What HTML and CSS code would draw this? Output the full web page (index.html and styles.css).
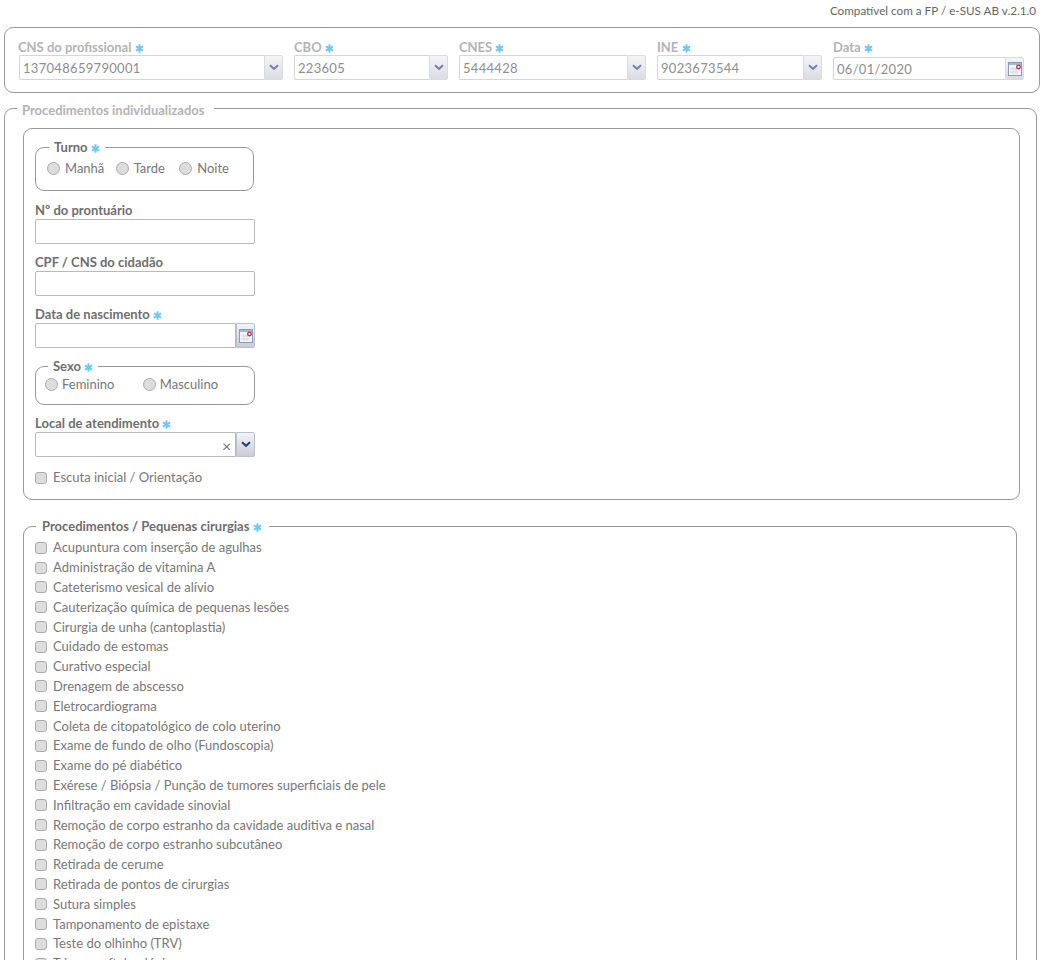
FILE: index.html
```html
<!DOCTYPE html>
<html lang="pt-BR">
<head>
    <meta charset="UTF-8">
    <title>Ficha de Procedimentos</title>
    <link rel="stylesheet" href="styles.css">
</head>
<body>
    <svg class="defs" width="0" height="0">
        <symbol id="req" viewBox="0 0 9 9">
            <path d="M4.5 .3v8.4M.9 2.4l7.2 4.2M8.1 2.4l-7.2 4.2" stroke="#6cc8fa" stroke-width="2" fill="none"/>
        </symbol>
        <symbol id="cal" viewBox="0 0 16 16">
            <rect x="1.5" y="1.5" width="13" height="13" fill="#f4f5f8" stroke="#8b9ab8"/>
            <rect x="2" y="2" width="12" height="2" fill="#a9b6cf"/>
            <path d="M3 8h9M3 11h9M6 6v7M9 6v7" stroke="#d5d9e2"/>
            <circle cx="11.5" cy="6" r="1.8" fill="#fff" stroke="#b8283c" stroke-width="1.3"/>
        </symbol>
        <symbol id="chev" viewBox="0 0 10 7">
            <path d="M1 1.2l4 3.6 4-3.6" stroke="currentColor" stroke-width="2" fill="none"/>
        </symbol>
    </svg>

    <div class="version">Compatível com a FP / e-SUS AB v.2.1.0</div>

    <div class="header-box">
        <div class="field f-cns">
            <label>CNS do profissional <svg class="req"><use href="#req"/></svg></label>
            <div class="combo off"><input type="text" value="137048659790001" disabled><span class="btn"><svg class="chev"><use href="#chev"/></svg></span></div>
        </div>
        <div class="field f-cbo">
            <label>CBO <svg class="req"><use href="#req"/></svg></label>
            <div class="combo off"><input type="text" value="223605" disabled><span class="btn"><svg class="chev"><use href="#chev"/></svg></span></div>
        </div>
        <div class="field f-cnes">
            <label>CNES <svg class="req"><use href="#req"/></svg></label>
            <div class="combo off"><input type="text" value="5444428" disabled><span class="btn"><svg class="chev"><use href="#chev"/></svg></span></div>
        </div>
        <div class="field f-ine">
            <label>INE <svg class="req"><use href="#req"/></svg></label>
            <div class="combo off"><input type="text" value="9023673544" disabled><span class="btn"><svg class="chev"><use href="#chev"/></svg></span></div>
        </div>
        <div class="field f-data">
            <label>Data <svg class="req"><use href="#req"/></svg></label>
            <div class="combo off"><input type="text" value="06/01/2020" disabled><span class="btn"><svg class="cal"><use href="#cal"/></svg></span></div>
        </div>
    </div>

    <fieldset class="main-box">
        <legend>Procedimentos individualizados</legend>

        <div class="patient-box">
            <fieldset class="group turno">
                <legend>Turno <svg class="req"><use href="#req"/></svg></legend>
                <label class="opt"><input type="radio" name="turno">Manhã</label>
                <label class="opt"><input type="radio" name="turno">Tarde</label>
                <label class="opt"><input type="radio" name="turno">Noite</label>
            </fieldset>

            <div class="item">
                <label>Nº do prontuário</label>
                <input class="plain" type="text">
            </div>
            <div class="item">
                <label>CPF / CNS do cidadão</label>
                <input class="plain" type="text">
            </div>
            <div class="item">
                <label>Data de nascimento <svg class="req"><use href="#req"/></svg></label>
                <div class="combo"><input type="text"><span class="btn"><svg class="cal"><use href="#cal"/></svg></span></div>
            </div>

            <fieldset class="group sexo">
                <legend>Sexo <svg class="req"><use href="#req"/></svg></legend>
                <label class="opt"><input type="radio" name="sexo">Feminino</label>
                <label class="opt"><input type="radio" name="sexo">Masculino</label>
            </fieldset>

            <div class="item local">
                <label>Local de atendimento <svg class="req"><use href="#req"/></svg></label>
                <div class="combo"><input type="text"><span class="clear">×</span><span class="btn"><svg class="chev dark"><use href="#chev"/></svg></span></div>
            </div>

            <label class="check escuta"><input type="checkbox">Escuta inicial / Orientação</label>
        </div>

        <fieldset class="proc-box">
            <legend>Procedimentos / Pequenas cirurgias <svg class="req"><use href="#req"/></svg></legend>
            <label class="check"><input type="checkbox">Acupuntura com inserção de agulhas</label>
            <label class="check"><input type="checkbox">Administração de vitamina A</label>
            <label class="check"><input type="checkbox">Cateterismo vesical de alívio</label>
            <label class="check"><input type="checkbox">Cauterização química de pequenas lesões</label>
            <label class="check"><input type="checkbox">Cirurgia de unha (cantoplastia)</label>
            <label class="check"><input type="checkbox">Cuidado de estomas</label>
            <label class="check"><input type="checkbox">Curativo especial</label>
            <label class="check"><input type="checkbox">Drenagem de abscesso</label>
            <label class="check"><input type="checkbox">Eletrocardiograma</label>
            <label class="check"><input type="checkbox">Coleta de citopatológico de colo uterino</label>
            <label class="check"><input type="checkbox">Exame de fundo de olho (Fundoscopia)</label>
            <label class="check"><input type="checkbox">Exame do pé diabético</label>
            <label class="check"><input type="checkbox">Exérese / Biópsia / Punção de tumores superficiais de pele</label>
            <label class="check"><input type="checkbox">Infiltração em cavidade sinovial</label>
            <label class="check"><input type="checkbox">Remoção de corpo estranho da cavidade auditiva e nasal</label>
            <label class="check"><input type="checkbox">Remoção de corpo estranho subcutâneo</label>
            <label class="check"><input type="checkbox">Retirada de cerume</label>
            <label class="check"><input type="checkbox">Retirada de pontos de cirurgias</label>
            <label class="check"><input type="checkbox">Sutura simples</label>
            <label class="check"><input type="checkbox">Tamponamento de epistaxe</label>
            <label class="check"><input type="checkbox">Teste do olhinho (TRV)</label>
            <label class="check"><input type="checkbox">Triagem oftalmológica</label>
            <label class="check"><input type="checkbox">Tricotomia</label>
        </fieldset>
    </fieldset>
</body>
</html>
```

FILE: styles.css
```css
html {
    height: 960px;
    overflow: hidden;
}
body {
    margin: 0;
    padding: 0 7px 0 4px;
    font-family: Lato, "Open Sans", sans-serif;
    font-size: 13px;
    color: #777;
    background: #fff;
}
.defs {
    position: absolute;
}
.version {
    height: 27px;
    padding: 3px 4px 0 0;
    box-sizing: border-box;
    text-align: right;
    font-size: 11.7px;
    line-height: 14px;
    color: #666;
}
.req {
    width: 9px;
    height: 9px;
    vertical-align: -1px;
}

/* top box */
.header-box {
    display: flex;
    gap: 11px;
    width: 1036px;
    height: 66px;
    box-sizing: border-box;
    padding: 11px 15px 0 14px;
    border: 1px solid #999;
    border-radius: 9px;
}
.field label {
    display: block;
    height: 16px;
    font-weight: 700;
    line-height: 17px;
    color: #b3b3b3;
}
.f-cns { width: 264px; }
.f-cns label { margin-left: -1px; }
.f-cbo { width: 154px; }
.f-cnes { width: 187px; }
.f-ine { width: 165px; }
.f-data { width: 191px; }
.combo {
    display: flex;
    height: 25px;
}
.combo input {
    flex: 1;
    min-width: 0;
    height: 25px;
    box-sizing: border-box;
    padding: 0 3px;
    border: 1px solid #b9b9b9;
    border-radius: 2px 0 0 2px;
    font: 13px Lato, sans-serif;
    color: #777;
    background: #fff;
}
.combo.off input {
    border-color: #d5d5d5;
    border-right: 0;
    color: #8e8e8e;
    letter-spacing: .3px;
}
.btn {
    display: flex;
    align-items: center;
    justify-content: center;
    width: 19px;
    height: 25px;
    box-sizing: border-box;
    border: 1px solid #b9c0d0;
    border-radius: 0 2px 2px 0;
    background: linear-gradient(#f3f4f6, #c9ccd6);
}
.combo.off .btn {
    border-color: #d8dbe4;
    background: linear-gradient(#f5f5f7, #dcdde2);
}
.f-data .combo {
    height: 23px;
    margin-top: 2px;
}
.f-data .combo input,
.f-data .btn {
    height: 23px;
}
.chev {
    width: 10px;
    height: 7px;
    color: #6d84ac;
}
.chev.dark {
    color: #1c3f7c;
}
.cal {
    width: 16px;
    height: 16px;
}

/* main box */
.main-box {
    width: 1033px;
    margin: 5px 0 0;
    padding: 9px 16px 0 18px;
    box-sizing: border-box;
    border: 1px solid #999;
    border-radius: 9px;
}
.main-box > legend {
    margin-left: -6px;
    padding: 4px 5px 0;
    width: 197px;
    box-sizing: border-box;
    font-weight: 700;
    line-height: 17px;
    color: #b3b3b3;
}
.patient-box {
    width: 997px;
    height: 372px;
    box-sizing: border-box;
    padding: 11px 0 0 11px;
    border: 1px solid #999;
    border-radius: 9px;
}
.group {
    margin: 0;
    box-sizing: border-box;
    border: 1px solid #999;
    border-radius: 9px;
}
.group legend {
    padding: 0 5px;
    font-weight: 700;
    line-height: 17px;
    color: #6e6e6e;
}
.turno {
    width: 219px;
    height: 52px;
    margin-top: -1px;
    padding: 4px 0 0 11px;
}
.turno legend {
    margin-left: 2px;
}
.sexo {
    width: 220px;
    height: 47px;
    margin-top: 10px;
    padding: 1px 0 0 9px;
}
.sexo legend {
    margin-left: 3px;
}
.opt {
    display: inline-flex;
    align-items: center;
    margin-right: 8px;
    line-height: 17px;
    color: #777;
}
.opt + .opt {
    margin-right: 11px;
}
.sexo .opt {
    margin-right: 25px;
}
.opt input {
    appearance: none;
    width: 13px;
    height: 13px;
    margin: 0 5px 0 0;
    border: 1px solid #aaa;
    border-radius: 50%;
    background: #ddd;
}
.sexo .opt input {
    margin-right: 4px;
}
.item {
    margin-top: 11px;
}
.item label {
    display: block;
    height: 17px;
    font-weight: 700;
    line-height: 17px;
    color: #6e6e6e;
}
.item + .item {
    margin-top: 10px;
}
.local {
    margin-top: 10px;
}
.plain {
    display: block;
    width: 220px;
    height: 25px;
    box-sizing: border-box;
    border: 1px solid #b9b9b9;
    border-radius: 2px;
}
.item .combo {
    width: 220px;
}
.clear {
    margin: 2px 3px 0 -14px;
    width: 11px;
    font-size: 16px;
    line-height: 23px;
    color: #777;
}
.check {
    display: flex;
    align-items: center;
    height: 19.8px;
    line-height: 17px;
    color: #777;
}
.check input {
    appearance: none;
    flex: none;
    width: 12px;
    height: 12px;
    margin: 0 6px 0 0;
    border: 1px solid #aaa;
    border-radius: 3px;
    background: #ddd;
}
.escuta {
    margin-top: 11px;
}

/* procedures list */
.proc-box {
    width: 994px;
    margin: 18px 0 0;
    padding: 3px 0 0 11px;
    box-sizing: border-box;
    border: 1px solid #999;
    border-radius: 9px;
}
.proc-box legend {
    margin-left: 1px;
    padding: 0 7px 0 6px;
    width: 233px;
    box-sizing: border-box;
    font-weight: 700;
    line-height: 17px;
    color: #6e6e6e;
    white-space: nowrap;
}
```
